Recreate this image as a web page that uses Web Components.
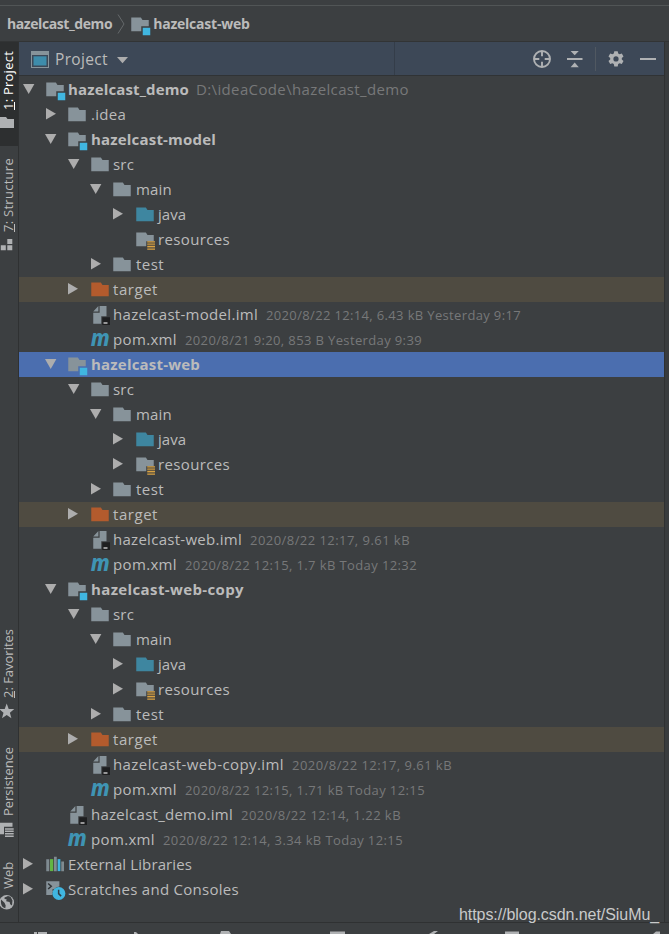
<!DOCTYPE html>
<html lang="en">
<head>
<meta charset="utf-8">
<title>hazelcast_demo</title>
<style>
    body {
        margin: 0;
        background: #3c3f41;
        font-family: "Open Sans", "Noto Sans", sans-serif;
        font-size: 15px;
        color: #bbbbbb;
    }
</style>
</head>
<body>
<ide-window>
    <nav-bar slot="nav">
        <fit-text w="106">hazelcast_demo</fit-text>
        <ide-icon name="chevron"></ide-icon>
        <ide-icon name="module"></ide-icon>
        <fit-text w="96">hazelcast-web</fit-text>
    </nav-bar>

    <side-tab slot="top-tabs" class="active" key="1" label=": Project" w="59" icon="tabfolder" style="height:104px"></side-tab>
    <side-tab slot="top-tabs" key="7" label=": Structure" w="74" icon="structure" style="margin-top:3px"></side-tab>
    <side-tab slot="bottom-tabs" key="2" label=": Favorites" w="69" icon="star" style="height:118px"></side-tab>
    <side-tab slot="bottom-tabs" label="Persistence" w="69" icon="persistence" style="height:115px"></side-tab>
    <side-tab slot="bottom-tabs" label="Web" w="27" icon="globe" style="height:69px"></side-tab>

    <panel-header slot="header">Project</panel-header>

    <tree-row depth="0" state="open" icon="module" bold w="121" meta="D:\ideaCode\hazelcast_demo" mw="213" path>hazelcast_demo</tree-row>
    <tree-row depth="1" state="closed" icon="folder" w="35">.idea</tree-row>
    <tree-row depth="1" state="open" icon="module" bold w="125">hazelcast-model</tree-row>
    <tree-row depth="2" state="open" icon="folder" w="21">src</tree-row>
    <tree-row depth="3" state="open" icon="folder" w="36">main</tree-row>
    <tree-row depth="4" state="closed" icon="source" w="28">java</tree-row>
    <tree-row depth="4" icon="resources" w="72">resources</tree-row>
    <tree-row depth="3" state="closed" icon="folder" w="28">test</tree-row>
    <tree-row depth="2" state="closed" icon="excluded" w="45">target</tree-row>
    <tree-row depth="2" icon="iml" w="145" meta="2020/8/22 12:14, 6.43 kB Yesterday 9:17" mw="255">hazelcast-model.iml</tree-row>
    <tree-row depth="2" icon="maven" w="64" meta="2020/8/21 9:20, 853 B Yesterday 9:39" mw="237">pom.xml</tree-row>
    <tree-row depth="1" state="open" icon="module" bold selected w="109">hazelcast-web</tree-row>
    <tree-row depth="2" state="open" icon="folder" w="21">src</tree-row>
    <tree-row depth="3" state="open" icon="folder" w="36">main</tree-row>
    <tree-row depth="4" state="closed" icon="source" w="28">java</tree-row>
    <tree-row depth="4" state="closed" icon="resources" w="72">resources</tree-row>
    <tree-row depth="3" state="closed" icon="folder" w="28">test</tree-row>
    <tree-row depth="2" state="closed" icon="excluded" w="45">target</tree-row>
    <tree-row depth="2" icon="iml" w="129" meta="2020/8/22 12:17, 9.61 kB" mw="160">hazelcast-web.iml</tree-row>
    <tree-row depth="2" icon="maven" w="64" meta="2020/8/22 12:15, 1.7 kB Today 12:32" mw="232">pom.xml</tree-row>
    <tree-row depth="1" state="open" icon="module" bold w="153">hazelcast-web-copy</tree-row>
    <tree-row depth="2" state="open" icon="folder" w="21">src</tree-row>
    <tree-row depth="3" state="open" icon="folder" w="36">main</tree-row>
    <tree-row depth="4" state="closed" icon="source" w="28">java</tree-row>
    <tree-row depth="4" state="closed" icon="resources" w="72">resources</tree-row>
    <tree-row depth="3" state="closed" icon="folder" w="28">test</tree-row>
    <tree-row depth="2" state="closed" icon="excluded" w="45">target</tree-row>
    <tree-row depth="2" icon="iml" w="171" meta="2020/8/22 12:17, 9.61 kB" mw="160">hazelcast-web-copy.iml</tree-row>
    <tree-row depth="2" icon="maven" w="64" meta="2020/8/22 12:15, 1.71 kB Today 12:15" mw="240">pom.xml</tree-row>
    <tree-row depth="1" icon="iml" w="142" meta="2020/8/22 12:14, 1.22 kB" mw="160">hazelcast_demo.iml</tree-row>
    <tree-row depth="1" icon="maven" w="64" meta="2020/8/22 12:14, 3.34 kB Today 12:15" mw="240">pom.xml</tree-row>
    <tree-row depth="0" state="closed" icon="libraries" w="124">External Libraries</tree-row>
    <tree-row depth="0" state="closed" icon="scratches" w="171">Scratches and Consoles</tree-row>

    <water-mark slot="overlay"><fit-text w="199">https://blog.csdn.net/SiuMu_</fit-text></water-mark>
</ide-window>

<script>
// 16x16 grid unless a size is given: [markup, width, height, viewBox]
const FOLDER = "M1 2h7.7l1.3 2h5v9H1z";
const CUT_FOLDER = "M1 2h7.7l1.3 2h5v5H9v4H1z";
const ICONS = {
    folder: [`<path fill="#87939a" d="${FOLDER}"/>`],
    source: [`<path fill="#3e86a0" d="${FOLDER}"/>`],
    excluded: [`<path fill="#b35b2d" d="${FOLDER}"/>`],
    module: [`<path fill="#87939a" d="${CUT_FOLDER}"/><path fill="#40b6e0" d="M10.2 10.2h6v6h-6z"/>`],
    resources: [`<path fill="#87939a" d="${CUT_FOLDER}"/><path fill="#d9a343" d="M9.8 8.9h6.2v1H9.8zM9.8 10.8h6.2v1H9.8zM9.8 12.7h6.2v1H9.8zM9.8 14.7h6.2v1H9.8z"/><path fill="#8f7341" d="M9.8 9.9h6.2v.5H9.8zM9.8 11.8h6.2v.5H9.8zM9.8 13.7h6.2v.5H9.8z"/>`],
    iml: [`<path fill="#87939a" d="M6.7.8v4.3H2.6zM7.7.8h5.5v8.2H9v6H2.6V6.1h5.1z"/><path fill="#1e1f20" d="M9.8 9.8H16V16H9.8z"/><path fill="#e0e0e0" d="M10.8 13.9h3.2v1h-3.2z"/>`],
    maven: [`<text x="0.5" y="12.9" font-family="Noto Sans, sans-serif" font-weight="800" font-style="italic" font-size="19" textLength="15.2" lengthAdjust="spacingAndGlyphs" fill="#3f94b4">m</text>`],
    libraries: [`<path fill="#7f8b91" d="M1 3.3h2.4v9.6H1zM7.2 1.4h2.2v11.5H7.2zM13 5.2h2.2v7.7H13z"/><path fill="#62b543" d="M4 3.3h2.6v9.6H4z"/><path fill="#40b6e0" d="M10.1 3.3h2.2v9.6h-2.2z"/>`],
    scratches: [`<path fill="#87939a" d="M1 1h10.5v4.2a6 6 0 0 0-5.6 6.7H1z"/><path fill="none" stroke="#303437" stroke-width="1.2" d="M2.5 2.8L5 5 2.5 7.2M6 8h2.5"/><circle cx="11.1" cy="10.8" r="5.2" fill="#40b6e0"/><path fill="none" stroke="#303b42" stroke-width="1.2" d="M10.9 7.8v3.1l2 2"/>`],
    chevron: [`<path fill="none" stroke="#65696b" stroke-width="1" d="M1 .5l6 9.5-6 9.5"/>`, 8, 20, "0 0 8 20"],
    open: [`<path fill="#adadad" d="M0 0h11.4L5.7 10z"/>`, 12, 10, "0 0 12 10"],
    closed: [`<path fill="#adadad" d="M0 0v11.4l10-5.7z"/>`, 10, 12, "0 0 10 12"],
    view: [`<path fill="#87939a" d="M0 0h18v17H0z"/><path fill="#3d4857" d="M1 4h16v12H1z"/><path fill="#3e8cab" d="M2.5 5.3h13v9.2h-13z"/>`, 18, 17, "0 0 18 17"],
    dropdown: [`<path fill="#adadad" d="M0 0h11L5.5 6.3z"/>`, 11, 7, "0 0 11 7"],
    locate: [`<g fill="none" stroke="#afb1b3" stroke-width="1.9"><circle cx="9" cy="9" r="8"/><path d="M9 1v5.3M9 11.7V17M1 9h5.3M11.7 9H17"/></g>`, 18, 18, "0 0 18 18"],
    collapse: [`<path fill="#afb1b3" d="M0 7.1h15.5v2H0zM3.6 0h8.2L7.7 4.3zM3.6 16.2h8.2L7.7 11.6z"/>`, 16, 17, "0 0 16 17"],
    gear: [`<path fill="#afb1b3" fill-rule="evenodd" d="M6.3 0h3.4l.5 2.3 1.4.8 2.2-.8 1.7 2.9-1.7 1.6v1.6l1.7 1.5-1.7 3-2.2-.8-1.4.8-.5 2.3H6.3l-.5-2.3-1.4-.8-2.2.8-1.7-3 1.7-1.5V6.8L.5 5.2l1.7-2.9 2.2.8 1.4-.8zM8 5.1a2.6 2.6 0 1 0 0 5.2 2.6 2.6 0 0 0 0-5.2z"/>`, 16, 16, "0 -0.2 16 16"],
    minus: [`<path fill="#afb1b3" d="M0 0h16v2H0z"/>`, 16, 2, "0 0 16 2"],
    tabfolder: [`<path fill="#afb1b3" d="M-1 2h7l1.5 2H14v9H-1z"/>`, 16, 16, "0 0 16 16"],
    structure: [`<path fill="#afb1b3" d="M7.3 2h5v5h-5zM.8 8.2h5v5h-5zM7.3 8.2h5v5h-5z"/>`, 16, 16],
    star: [`<path fill="#afb1b3" d="M6.7.5l2 5.4 5.6.2-4.4 3.6 1.5 5.5-4.7-3.2L2 15.2l1.5-5.500L-.9 6.100l5.600-.2z"/>`, 16, 16],
    persistence: [`<path fill="#afb1b3" d="M-1 1.800h13.500v4H4v7.500h-5z"/><path fill="#afb1b3" d="M5 7.200h8.700v1.500H5zM5 9.500h8.700V11H5zM5 12h8.700v1.500H5zM5 14.500h8.700V16H5z"/>`, 16, 16],
    globe: [`<circle cx="6.700" cy="8.300" r="7.300" fill="#afb1b3"/><path fill="#3c3f41" d="M1 5.500l3.500 3.200 1.200 2.800-.4 2.700C2 13.500.5 10.500 1 5.500zM4.500 3.500L8 2l2.500.8 2 3.700-.5 5-1.800-1.200-.6-2.300-3.400-.8.4-1.900-2-.4z"/>`, 16, 16]
};

// Draws one icon from the table above
class IdeIcon extends HTMLElement {
    constructor() {
        super();
        this.attachShadow({ mode: "open" });
    }

    connectedCallback() {
        const [markup, w = 20, h = 20, box = "0 0 16 16"] = ICONS[this.getAttribute("name")];
        this.shadowRoot.innerHTML = `
            <style>
                :host { display: block; flex: none; }
                svg { display: block; overflow: visible; }
            </style>
            <svg width="${w}" height="${h}" viewBox="${box}">${markup}</svg>`;
    }
}
customElements.define("ide-icon", IdeIcon);

// One line of text, tracked so that it fills the width in "w"
class FitText extends HTMLElement {
    constructor() {
        super();
        this.attachShadow({ mode: "open" });
        this.shadowRoot.innerHTML = `
            <style>
                :host { display: block; flex: none; white-space: nowrap; }
                span { display: inline-block; }
            </style>
            <span><slot></slot></span>`;
    }

    connectedCallback() {
        const span = this.shadowRoot.querySelector("span");
        const vertical = this.hasAttribute("vertical");
        const box = span.getBoundingClientRect();
        const natural = vertical ? box.height : box.width;
        const target = Number(this.getAttribute("w"));
        if (natural && target) {
            span.style.letterSpacing = (target - natural) / this.textContent.length + "px";
        }
    }
}
customElements.define("fit-text", FitText);

class NavBar extends HTMLElement {
    constructor() {
        super();
        this.attachShadow({ mode: "open" });
        this.shadowRoot.innerHTML = `
            <style>
                :host {
                    display: flex;
                    align-items: center;
                    height: 35px;
                    margin-top: 5px;
                    padding-left: 7px;
                    border-top: 1px solid #515556;
                    border-bottom: 1px solid #323435;
                    font-size: 14px;
                    font-weight: bold;
                    line-height: 20px;
                }
                ::slotted(ide-icon) { margin: 1px 0 0 5px; }
                ::slotted(ide-icon:nth-of-type(2)) { margin: 3px 3px 0 5px; }
            </style>
            <slot></slot>`;
    }
}
customElements.define("nav-bar", NavBar);

class SideTab extends HTMLElement {
    constructor() {
        super();
        this.attachShadow({ mode: "open" });
    }

    connectedCallback() {
        const key = this.getAttribute("key");
        this.shadowRoot.innerHTML = `
            <style>
                :host {
                    display: flex;
                    flex-direction: column;
                    gap: 5px;
                    box-sizing: border-box;
                    padding-top: 9px;
                    font-size: 13px;
                    line-height: 16px;
                }
                :host(.active) { background: #2d2f30; color: #ffffff; }
                fit-text { writing-mode: vertical-rl; transform: rotate(180deg); width: 16px; }
                /* the mnemonic's underline, close to the baseline */
                u {
                    text-decoration: none;
                    background: linear-gradient(currentColor, currentColor) 2px 0 / 1px 100% no-repeat;
                }
            </style>
            <fit-text vertical w="${this.getAttribute("w")}">${key ? `<u>${key}</u>` : ""}${this.getAttribute("label")}</fit-text>
            <ide-icon name="${this.getAttribute("icon")}"></ide-icon>`;
    }
}
customElements.define("side-tab", SideTab);

class PanelHeader extends HTMLElement {
    constructor() {
        super();
        this.attachShadow({ mode: "open" });
    }

    connectedCallback() {
        this.shadowRoot.innerHTML = `
            <style>
                :host {
                    display: flex;
                    height: 33px;
                    background: #3d4857;
                    border-bottom: 1px solid #303335;
                    font-size: 15.5px;
                }
                .title, .tools { display: flex; align-items: center; }
                .title {
                    box-sizing: border-box;
                    width: 376px;
                    padding-left: 12px;
                    border-right: 1px solid #343d49;
                }
                .title ide-icon:first-child { margin-top: 2px; }
                .title fit-text { margin: 1px 9px 0 6px; }
                .tools { flex: 1; justify-content: flex-end; padding-right: 8px; }
                .line { width: 1px; height: 24px; background: #505861; margin: 0 12px; }
                [name="dropdown"] { margin-top: 3px; }
                [name="collapse"] { margin-top: 1px; }
                [name="locate"], [name="gear"] { margin-right: 16px; }
            </style>
            <div class="title">
                <ide-icon name="view"></ide-icon>
                <fit-text w="53">${this.textContent}</fit-text>
                <ide-icon name="dropdown"></ide-icon>
            </div>
            <div class="tools">
                <ide-icon name="locate"></ide-icon>
                <ide-icon name="collapse"></ide-icon>
                <div class="line"></div>
                <ide-icon name="gear"></ide-icon>
                <ide-icon name="minus"></ide-icon>
            </div>`;
    }
}
customElements.define("panel-header", PanelHeader);

class TreeRow extends HTMLElement {
    constructor() {
        super();
        this.attachShadow({ mode: "open" });
    }

    connectedCallback() {
        const state = this.getAttribute("state");
        const meta = this.getAttribute("meta");
        const depth = Number(this.getAttribute("depth"));
        // odd levels start on a half pixel: the closed arrow and the text round up, the rest down
        const half = depth % 2;
        this.shadowRoot.innerHTML = `
            <style>
                :host {
                    display: flex;
                    align-items: center;
                    height: 25px;
                    padding-left: ${4 + Math.ceil(depth * 22.5)}px;
                    line-height: 24px;
                }
                :host([icon="excluded"]) { background: #4f4b41; }
                :host([selected]) { background: #4b6eaf; }
                :host([bold]) .name { font-weight: bold; }
                .twisty { width: ${22 - half}px; flex: none; }
                .twisty ide-icon { margin-bottom: 2px; }
                .twisty [name="open"] { margin-left: -${half}px; }
                .icon { margin: 1px ${3 + half}px 0 0; }
                .name { margin-bottom: 1px; }
                .meta { margin-left: 8px; font-size: 13px; color: #777879; }
                :host([path]) .meta { margin: 0 0 1px 7px; font-size: 15px; }
            </style>
            <div class="twisty">${state ? `<ide-icon name="${state}"></ide-icon>` : ""}</div>
            <ide-icon class="icon" name="${this.getAttribute("icon")}"></ide-icon>
            <fit-text class="name" w="${this.getAttribute("w")}">${this.textContent}</fit-text>
            ${meta ? `<fit-text class="meta" w="${this.getAttribute("mw")}">${meta}</fit-text>` : ""}`;
    }
}
customElements.define("tree-row", TreeRow);

class WaterMark extends HTMLElement {
    constructor() {
        super();
        this.attachShadow({ mode: "open" });
        this.shadowRoot.innerHTML = `
            <style>
                :host {
                    position: absolute;
                    left: 459px;
                    top: 905px;
                    font: 16px/20px "Liberation Sans", sans-serif;
                    color: #c9caca;
                }
            </style>
            <slot></slot>`;
    }
}
customElements.define("water-mark", WaterMark);

class IdeWindow extends HTMLElement {
    constructor() {
        super();
        this.attachShadow({ mode: "open" });
        this.shadowRoot.innerHTML = `
            <style>
                :host {
                    display: flex;
                    flex-direction: column;
                    position: relative;
                    width: 669px;
                    height: 934px;
                    overflow: hidden;
                }
                .main { display: flex; height: 880px; border-bottom: 1px solid #2f3132; }
                .stripe {
                    display: flex;
                    flex-direction: column;
                    justify-content: space-between;
                    width: 18px;
                    border-right: 1px solid #2f3132;
                    overflow: hidden;
                }
                .panel { width: 645px; }
                .tree { padding-top: 1px; }
                .edge { flex: 1; border-left: 1px solid #2f3132; background: #393c3e; }
                .status { flex: none; width: 669px; height: 11px; }
                .status svg { display: block; }
            </style>
            <slot name="nav"></slot>
            <div class="main">
                <div class="stripe">
                    <div><slot name="top-tabs"></slot></div>
                    <div><slot name="bottom-tabs"></slot></div>
                </div>
                <div class="panel">
                    <slot name="header"></slot>
                    <div class="tree"><slot></slot></div>
                </div>
                <div class="edge"></div>
            </div>
            <div class="status">
                <svg width="669" height="11"><path fill="#afb1b3" d="M34 9h3v2h-3zM38 9h9v2h-9zM134 9h2l2 2h-4zM221 8h8l2 3h-11zM330 8.500h15V11h-15zM434 8h4l-4 3h-5zM505 8.500h14V11h-14zM656 8.500h4V11h-7z"/></svg>
            </div>
            <slot name="overlay"></slot>`;
    }
}
customElements.define("ide-window", IdeWindow);
</script>
</body>
</html>
